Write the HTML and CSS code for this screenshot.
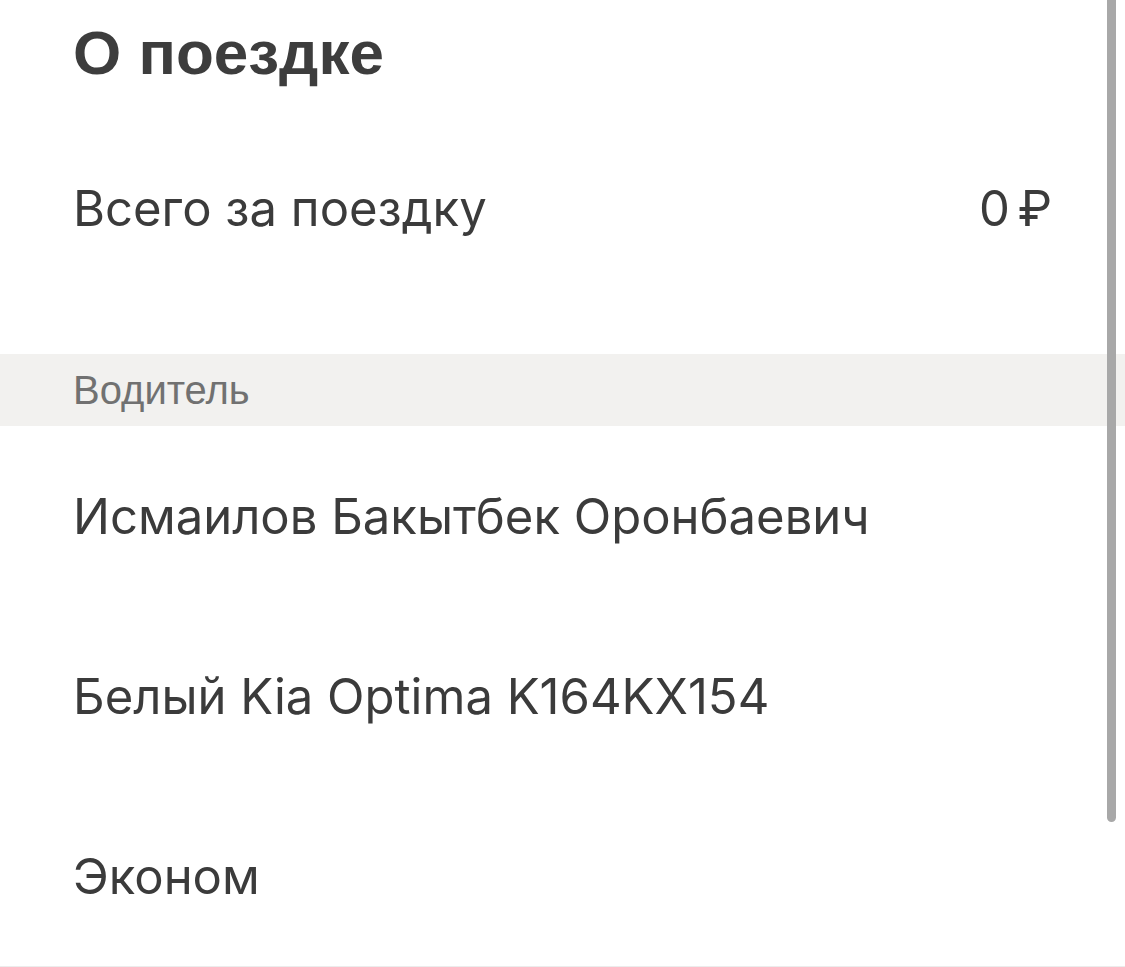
FILE: index.html
```html
<!DOCTYPE html>
<html lang="ru">
<head>
<meta charset="utf-8">
<title>О поездке</title>
<link rel="stylesheet" href="styles.css">
</head>
<body>
<div class="page">
  <header class="title-block">
    <h1 class="title">О поездке</h1>
  </header>
  <div class="total-row">
    <span class="row-text">Всего за поездку</span>
    <span class="row-text amount">0 ₽</span>
  </div>
  <div class="section-head">
    <span class="section-label">Водитель</span>
  </div>
  <div class="info-row"><span class="row-text">Исмаилов Бакытбек Оронбаевич</span></div>
  <div class="info-row"><span class="row-text">Белый Kia Optima K164KX154</span></div>
  <div class="info-row last"><span class="row-text">Эконом</span></div>
  <div class="scrollbar"></div>
</div>
</body>
</html>
```

FILE: styles.css
```css
html, body {
  margin: 0;
  padding: 0;
  background: #ffffff;
}

.page {
  position: relative;
  width: 1125px;
  height: 967px;
  overflow: hidden;
  color: #3b3b3b;
}

.title-block {
  height: 106px;
  padding-left: 73px;
  display: flex;
  align-items: center;
}

.title {
  margin: 0;
  font-family: "Liberation Sans", Arial, sans-serif;
  font-weight: 700;
  font-size: 62px;
  line-height: 1;
  color: #3d3d3d;
}

.total-row {
  height: 204px;
  padding: 0 73px;
  display: flex;
  align-items: center;
  justify-content: space-between;
  margin-bottom: 44px;
}

.row-text {
  font-family: "Inter", "Liberation Sans", sans-serif;
  font-size: 49px;
  line-height: 1;
  color: #3b3b3b;
}

.amount {
  word-spacing: -6px;
}

.section-head {
  height: 72px;
  background: #f2f1ef;
  padding-left: 73px;
  display: flex;
  align-items: center;
}

.section-label {
  font-family: "Liberation Sans", Arial, sans-serif;
  font-size: 40px;
  line-height: 1;
  color: #717171;
}

.info-row {
  height: 180px;
  padding-left: 73px;
  display: flex;
  align-items: center;
}

.info-row.last {
  border-bottom: 2px solid #ececec;
}

.scrollbar {
  position: absolute;
  left: 1107px;
  top: -10px;
  width: 9px;
  height: 832px;
  border-radius: 5px;
  background: #a8a8a8;
}
```
